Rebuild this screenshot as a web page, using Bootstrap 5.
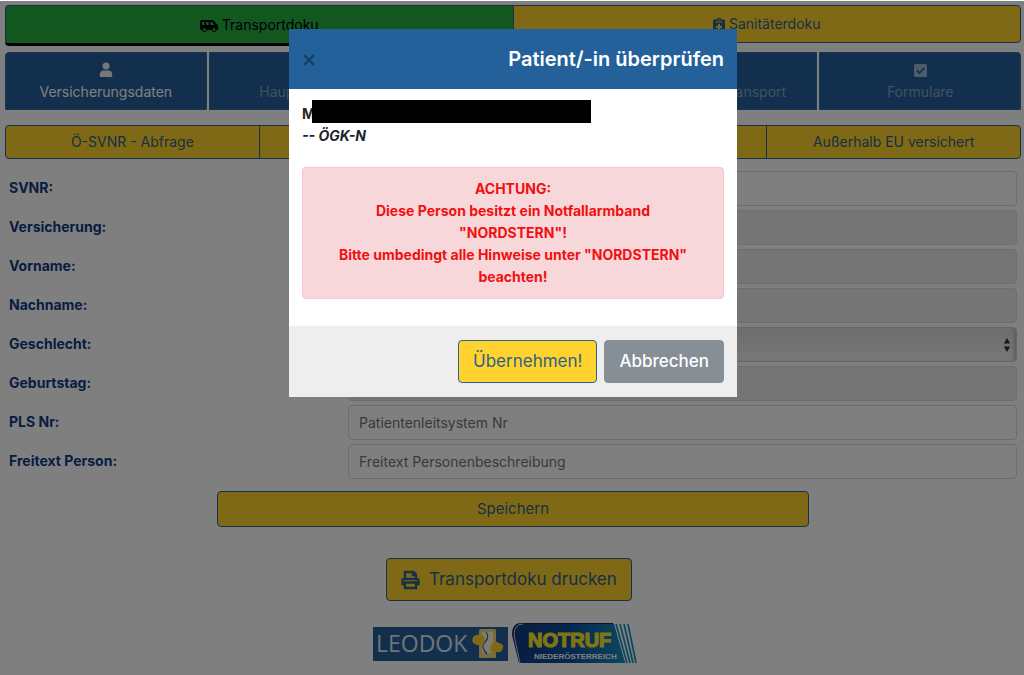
<!DOCTYPE html>
<html lang="de">
<head>
<meta charset="utf-8">
<meta name="viewport" content="width=device-width, initial-scale=1">
<title>Transportdoku</title>
<link href="https://cdn.jsdelivr.net/npm/bootstrap@5.3.0/dist/css/bootstrap.min.css" rel="stylesheet">
<style>
  :root { --leo-blue: #24609a; --leo-yellow: #ffd22f; --leo-line: #2a6592; }
  body { font-family: Inter, "Liberation Sans", sans-serif; font-size: 14px; line-height: 22px; padding: 5px 3px 0 5px; background: #fff; }
  .modal-backdrop { top: 1px; }
  .btn { font-size: 15px; line-height: 22px; border-radius: 4px; padding: 5px 14px; --bs-btn-border-width: 1px; }
  .btn-leo { --bs-btn-bg: var(--leo-yellow); --bs-btn-color: #2c6286; --bs-btn-border-color: var(--leo-line); --bs-btn-hover-bg: #f2c520; --bs-btn-hover-border-color: var(--leo-line); }
  .btn-big { font-size: 17px; line-height: 27px; padding: 7px 14px; }
  .doc-tabs { margin-bottom: 6px; }
  .doc-tab { height: 38px; padding: 7px; font-size: 14px; }
  .doc-tab.current { height: 41px; --bs-btn-bg: #24ae40; --bs-btn-color: #000; border-bottom: 3px solid #000; }
  .step-tabs { gap: 2px; }
  .step-tab { background: var(--leo-blue); color: #7fa4c4; border: 1px solid #2f6ea8; height: 58px; padding-top: 6px; text-decoration: none; font-size: 14px; }
  .step-tab.current { color: #fff; }
  .step-tab:first-child { border-radius: 4px 0 0 0; }
  .step-tab:last-child { border-radius: 0 4px 0 0; }
  .query-row { margin: 15px 0 12px; }
  .query-btn { height: 34px; font-size: 14px; padding: 5px; }
  .form-grid { padding: 0 4px; }
  .form-grid label { color: #0f3a84; font-weight: 700; line-height: 22px; padding: 6px 0; }
  .form-grid .col-8 { padding-left: 3px; }
  .field { height: 35px; font-size: 14px; border-color: #d6d8da; border-radius: 4px; padding: 5px 10px; }
  .field::placeholder { color: #6c757d; }
  .field:disabled { background-color: #eaeaea; border-color: #dcdcdc; }
  select.field:disabled { background: url("data:image/svg+xml,%3Csvg xmlns='http://www.w3.org/2000/svg' viewBox='0 0 8 14'%3E%3Cpath fill='%23333' d='M4 0l3.2 5.500H.8zM4 14L.8 8.500h6.400z'/%3E%3C/svg%3E") right 5px center / 8px 14px no-repeat, linear-gradient(#dcdcdc, #efefef); border-color: #ccc; box-shadow: inset -4px 0 3px -2px #bbb; }
  .save-row { margin-top: 12px; }
  .save-btn { height: 36px; }
  .print-row { margin-top: 31px; }
  .logo-row { margin-top: 22px; }
  .check-dialog { max-width: 448px; margin: 29px auto; }
  #check { padding-left: 2px; }
  .check-dialog .modal-content { border: 0; border-radius: 0; }
  .check-dialog .modal-header { background: var(--leo-blue); color: #fff; height: 60px; padding: 13px; border: 0; border-radius: 0; }
  .check-dialog .modal-title { font-size: 20px; line-height: 30px; font-weight: 600; }
  .close-x { background: none; border: 0; padding: 2px 1px; line-height: 1; color: #123e68; }
  .check-dialog .modal-body { padding: 14px 13px 13px; color: #212529; }
  .redacted { position: absolute; left: 23px; top: 11px; width: 279px; height: 23px; background: #000; }
  .warning-box { background: #f8d7da; border: 1px solid #f5c6cb; color: #f11010; border-radius: 4px; padding: 10px 18px; margin: 20px 0 14px; font-weight: 700; }
  .check-dialog .modal-footer { background: #eee; border: 0; border-radius: 0; padding: 14px 13px; gap: 7px; }
  .check-dialog .modal-footer > * { margin: 0; }
  .btn-cancel { --bs-btn-bg: #868e96; --bs-btn-color: #fff; --bs-btn-border-color: #868e96; --bs-btn-hover-bg: #757d85; --bs-btn-hover-color: #fff; font-weight: 500; }
</style>
</head>
<body>
<nav class="btn-group d-flex align-items-start doc-tabs" aria-label="Dokumentation">
  <button type="button" class="btn btn-leo doc-tab current w-50"><svg width="18" height="14" viewBox="0 0 18 14" fill="currentColor" aria-hidden="true"><path fill-rule="evenodd" d="M1.500 1H12q1 0 1.700.8L17 5.500q1 1 1 2V11h-1.500a2.500 2.500 0 0 1-4.900 0H6.900A2.500 2.500 0 0 1 2 11H1Q0 11 0 10V2.500Q0 1 1.500 1ZM2 3v3h2.500V3Zm4 0v3h2.700V3Zm4.300 0v3h4.200L12 3ZM4.500 9a1.500 1.500 0 1 0 0 3 1.500 1.500 0 0 0 0-3ZM14 9a1.500 1.500 0 1 0 0 3 1.500 1.500 0 0 0 0-3Z"/></svg> Transportdoku</button>
  <button type="button" class="btn btn-leo doc-tab w-50"><svg width="12" height="14" viewBox="0 0 12 14" fill="currentColor" aria-hidden="true"><path fill-rule="evenodd" d="M4 1.500a2 2 0 0 1 4 0h3q1 0 1 1V13q0 1-1 1H1q-1 0-1-1V2.500q0-1 1-1ZM6 1a.7.7 0 1 0 0 1.400A.7.7 0 0 0 6 1ZM3 3.500v1h6v-1ZM5 6v2H3v2h2v2h2v-2h2V8H7V6Z"/></svg> Sanitäterdoku</button>
</nav>

<nav class="d-flex step-tabs" aria-label="Abschnitte">
  <a href="#" class="step-tab current w-100 d-flex flex-column align-items-center"><svg width="14" height="22" viewBox="0 0 14 22" fill="#eee" aria-hidden="true"><circle cx="7" cy="7" r="3.500"/><path d="M.7 16.500q0-5 4-5h4.600q4 0 4 5 0 1.500-1 1.500H1.700q-1 0-1-1.500Z"/></svg>Versicherungsdaten</a>
  <a href="#" class="step-tab w-100 d-flex flex-column align-items-center"><svg width="14" height="22" viewBox="0 0 14 22" fill="#9fb9d0" aria-hidden="true"><path d="M5 5h4v4h4v4H9v4H5v-4H1V9h4Z"/></svg>Hauptdiagnose</a>
  <a href="#" class="step-tab w-100 d-flex flex-column align-items-center"><svg width="14" height="22" viewBox="0 0 14 22" fill="#9fb9d0" aria-hidden="true"><circle cx="7" cy="11" r="6"/></svg>Notfall</a>
  <a href="#" class="step-tab w-100 d-flex flex-column align-items-center"><svg width="14" height="22" viewBox="0 0 14 22" fill="#9fb9d0" aria-hidden="true"><path d="M1 6h12v9H1Z"/></svg>Daten zum Transport</a>
  <a href="#" class="step-tab w-100 d-flex flex-column align-items-center"><svg width="13" height="22" viewBox="0 0 13 22" aria-hidden="true"><rect y="5" width="13" height="13" rx="1.500" fill="#9fb9d0"/><path d="M3 11.500l2.500 2.500 4.800-5" fill="none" stroke="#24609a" stroke-width="1.800"/></svg>Formulare</a>
</nav>

<div class="btn-group d-flex query-row" role="group" aria-label="Abfragen">
  <button type="button" class="btn btn-leo query-btn w-25">Ö-SVNR - Abfrage</button>
  <button type="button" class="btn btn-leo query-btn w-25">e-card</button>
  <button type="button" class="btn btn-leo query-btn w-25">EU versichert</button>
  <button type="button" class="btn btn-leo query-btn w-25">Außerhalb EU versichert</button>
</div>

<form>
  <div class="form-grid d-grid gap-1">
    <div class="row g-0"><label class="col-4" for="svnr">SVNR:</label><div class="col-8"><input class="form-control field" id="svnr"></div></div>
    <div class="row g-0"><label class="col-4" for="vers">Versicherung:</label><div class="col-8"><input class="form-control field" id="vers" disabled></div></div>
    <div class="row g-0"><label class="col-4" for="vor">Vorname:</label><div class="col-8"><input class="form-control field" id="vor" disabled></div></div>
    <div class="row g-0"><label class="col-4" for="nach">Nachname:</label><div class="col-8"><input class="form-control field" id="nach" disabled></div></div>
    <div class="row g-0"><label class="col-4" for="sex">Geschlecht:</label><div class="col-8"><select class="form-select field" id="sex" disabled><option></option></select></div></div>
    <div class="row g-0"><label class="col-4" for="geb">Geburtstag:</label><div class="col-8"><input class="form-control field" id="geb" disabled></div></div>
    <div class="row g-0"><label class="col-4" for="pls">PLS Nr:</label><div class="col-8"><input class="form-control field" id="pls" placeholder="Patientenleitsystem Nr"></div></div>
    <div class="row g-0"><label class="col-4" for="frei">Freitext Person:</label><div class="col-8"><input class="form-control field" id="frei" placeholder="Freitext Personenbeschreibung"></div></div>
  </div>
  <div class="row g-0 justify-content-center save-row"><div class="col-7"><button type="button" class="btn btn-leo save-btn w-100">Speichern</button></div></div>
</form>

<div class="text-center print-row pe-2">
  <button type="button" class="btn btn-leo btn-big"><svg class="me-1" width="19" height="20" viewBox="0 0 19 20" fill="none" stroke="currentColor" stroke-width="2.400" aria-hidden="true"><path d="M4 9V2h8.500L15 4.500V9M12 2v3h3M4 14H1.500v-3.500q0-1.500 1.500-1.500h13q1.500 0 1.500 1.500V14H15M4 12.500h11V18H4Z"/></svg> Transportdoku drucken</button>
</div>

<footer class="d-flex justify-content-center align-items-center gap-1 logo-row pe-3">
  <svg width="135" height="34" viewBox="0 0 135 34" role="img" aria-label="LEODOK">
    <rect width="135" height="34" fill="#24609a"/>
    <text x="3" y="25" font-family="Open Sans" font-size="23" fill="#dfe9f2">LEODOK</text>
    <rect x="106" y="2" width="17" height="29" rx="1.500" fill="#f1d97c"/><rect x="109" y="5" width="11" height="21" fill="#fffbe5"/>
    <path d="M113 5q4 5-1 10t2 12" fill="none" stroke="#24609a" stroke-width="1.200"/>
    <path d="M100 10q4-4 7-1 5-1 5 4t-5 5q-3 1-5-1-4-1-2-7ZM119 17q3-4 7-1 5 1 4 5-1 5-6 4-6 2-7-3 0-4 2-5Z" fill="#ffd22f"/>
  </svg>
  <svg width="125" height="41" viewBox="0 0 125 41" role="img" aria-label="Notruf Niederösterreich">
    <defs><linearGradient id="nr"><stop offset="0" stop-color="#103a80"/><stop offset=".5" stop-color="#0b4f9c"/><stop offset="1" stop-color="#168fc0"/></linearGradient></defs>
    <path d="M9 0h92l12 40H7L0 12Q0 0 9 0Z" fill="#191c55"/><path d="M11 1h91l11 39H8L2 12Q2 1 11 1Z" fill="url(#nr)"/>
    <path d="M104 1l11 39M108 1l10 39M112 1l9 39M116 1l8 39" stroke="#168fc0" stroke-width="1.700"/>
    <path d="M2 12Q2 1 11 1M2 12l6 28" fill="none" stroke="#c5d9ea"/>
    <text x="16" y="24" font-family="Liberation Sans" font-weight="700" font-size="20" fill="#ffea28" stroke="#ffea28" stroke-width="1.200">NOTRUF</text>
    <text x="22" y="36" font-family="Liberation Sans" font-weight="700" font-size="8" fill="#fff">NIEDERÖSTERREICH</text>
  </svg>
</footer>

<div class="modal-backdrop show"></div>
<div class="modal d-block" id="check" tabindex="-1" role="dialog" aria-labelledby="checkTitle">
  <div class="modal-dialog check-dialog">
    <div class="modal-content">
      <div class="modal-header d-flex justify-content-between align-items-center">
        <button type="button" class="close-x" aria-label="Schließen"><svg width="12" height="12" viewBox="0 0 12 12" stroke="currentColor" stroke-width="2.400" aria-hidden="true"><path d="M1 1l10 10M11 1L1 11"/></svg></button>
        <h5 class="modal-title" id="checkTitle">Patient/-in überprüfen</h5>
      </div>
      <div class="modal-body">
        <div class="fw-bold">M</div><span class="redacted"></span>
        <div class="fw-bold fst-italic">-- ÖGK-N</div>
        <div class="warning-box text-center" role="alert">ACHTUNG:<br>Diese Person besitzt ein Notfallarmband "NORDSTERN"!<br>Bitte umbedingt alle Hinweise unter "NORDSTERN" beachten!</div>
      </div>
      <div class="modal-footer">
        <button type="button" class="btn btn-leo btn-big">Übernehmen!</button>
        <button type="button" class="btn btn-cancel btn-big">Abbrechen</button>
      </div>
    </div>
  </div>
</div>
<script src="https://cdn.jsdelivr.net/npm/bootstrap@5.3.0/dist/js/bootstrap.bundle.min.js"></script>
</body>
</html>
